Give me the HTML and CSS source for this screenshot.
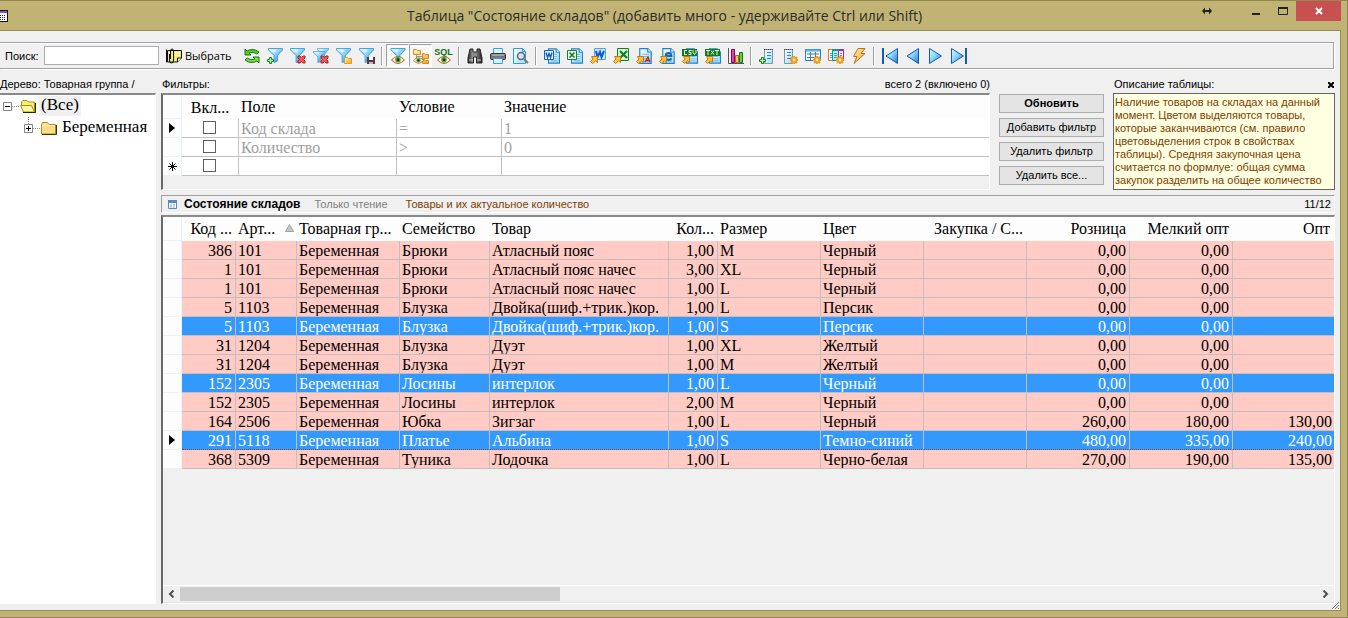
FILE: index.html
```html
<!DOCTYPE html>
<html lang="ru">
<head>
<meta charset="utf-8">
<title>Таблица "Состояние складов"</title>
<link rel="stylesheet" href="styles.css">
</head>
<body>
<svg class="sprite" aria-hidden="true">
  <defs>
    <linearGradient id="blue" x1="0" y1="0" x2="1" y2="1"><stop offset="0" stop-color="#e4f9ff"/><stop offset=".45" stop-color="#8cd6fa"/><stop offset="1" stop-color="#1c78d4"/></linearGradient>
    <linearGradient id="sheet" x1="0" y1="0" x2="1" y2="1"><stop offset="0" stop-color="#ffffff"/><stop offset="1" stop-color="#9fdcf8"/></linearGradient>
    <linearGradient id="gold" x1="0" y1="0" x2="1" y2="1"><stop offset="0" stop-color="#fff3a8"/><stop offset="1" stop-color="#f0a030"/></linearGradient>
    <linearGradient id="metal" x1="0" y1="0" x2="1" y2="0"><stop offset="0" stop-color="#222"/><stop offset=".4" stop-color="#aaa"/><stop offset="1" stop-color="#222"/></linearGradient>
  </defs>
  <symbol id="funnel" viewBox="0 0 16 16"><path d="M.5.5h15v1.500L10 8v6l-3.500 1.500V8L.5 2z" fill="url(#blue)" stroke="#3c9ae4"/><path d="M2 1.500h7L7 5z" fill="#dff7ff"/></symbol>
  <symbol id="cross" viewBox="0 0 9 9"><path d="M1 1h2l1.500 1.500L6 1h2v2L6.500 4.500 8 6v2H6L4.500 6.500 3 8H1V6l1.500-1.500L1 3z" fill="#f05a5a" stroke="#b81420"/></symbol>
  <symbol id="plus" viewBox="0 0 7 7"><path d="M2.500.5h2v2h2v2h-2v2h-2v-2h-2v-2h2z" fill="#b5f5a0" stroke="#16801c"/></symbol>
  <symbol id="eye" viewBox="0 0 14 8"><path d="M.5 4Q3.500.5 7 .5t6.500 3.500Q10 7.500 7 7.500T.5 4z" fill="#fdf1d5" stroke="#a8622e"/><circle cx="7" cy="3.800" r="2.700" fill="#4c9a38"/><circle cx="7" cy="3.800" r="1.200" fill="#162c10"/></symbol>
  <symbol id="page" viewBox="0 0 11 14"><path d="M.5.5h7l3 3v10H.5z" fill="url(#sheet)" stroke="#1c80d0"/><path d="M7.500.5v3h3" fill="#fff" stroke="#1c80d0"/><path d="M2.500 5.500h6M2.500 7.500h6M2.500 9.500h6M2.500 11.500h6" stroke="#7cbce8"/></symbol>
  <symbol id="arrow" viewBox="0 0 8 8"><path d="M1.500.5h6v6L5.500 5 2.500 7.500l-2-2L3 3z" fill="#ffc13c" stroke="#c47a10"/></symbol>
  <symbol id="gear" viewBox="0 0 8 8"><path d="M3 0h2v1l1.500-.5 1 1L7 3h1v2H7l.5 1.500-1 1L5 7v1H3V7l-1.500.5-1-1L1 5H0V3h1L.5 1.500l1-1L3 1z" fill="#f79a1c"/><circle cx="4" cy="4" r="1.400" fill="#fff2c6"/></symbol>
  <symbol id="folder" viewBox="0 0 16 13"><path d="M.5 2.500l1-2h5l1.500 2h6.500v9.500H.5z" fill="#ffdc8c" stroke="#b09010"/><path d="M1.500 3.500h12" stroke="#fff8c8"/><path d="M1 12.500h14.500V3" fill="none" stroke="#3c3208"/></symbol>
  <symbol id="folder-open" viewBox="0 0 16 13"><path d="M1.500 5V2l1.500-1.500h4L8.500 2h6v10" fill="#f6ec78" stroke="#a09018"/><path d="M.5 5.500h11l3 6.500H3.500z" fill="#fff79a" stroke="#a09018"/><path d="M3 12.500h12.500V3" fill="none" stroke="#2c2608"/></symbol>
  <symbol id="tri" viewBox="0 0 13 16"><path d="M12.500.5v15L1 8z" fill="url(#blue)" stroke="#1659b4"/></symbol>
</svg>

<div class="window">
  <header class="titlebar">
    <svg class="app-icon" viewBox="0 0 8 12"><path d="M0 0h8v12H0z" fill="#111"/><path d="M0 1h7v2H0z" fill="#7a5cb8"/><path d="M0 3h7v8H0z" fill="#fff"/><path d="M0 5.500h6M0 7.500h6M0 9.500h6" stroke="#222" stroke-dasharray="1 1"/></svg>
    <h1 class="title">Таблица "Состояние складов" (добавить много - удерживайте Ctrl или Shift)</h1>
    <div class="win-buttons">
      <button class="win-btn move" aria-label="Переместить"><svg width="10" height="8" viewBox="0 0 10 8"><path d="M0 4l3-3.500v2.500h4V.5L10 4 7 7.500V5H3v2.500z" fill="#222"/></svg></button>
      <button class="win-btn min" aria-label="Свернуть"><svg width="10" height="10" viewBox="0 0 10 10"><path d="M1 7h8v2H1z" fill="#222"/></svg></button>
      <button class="win-btn max" aria-label="Развернуть"><svg width="10" height="8" viewBox="0 0 10 8"><path d="M.5 1.500h9v6h-9z" fill="none" stroke="#222"/><path d="M0 0h10v2H0z" fill="#222"/></svg></button>
      <button class="win-btn close" aria-label="Закрыть"><svg width="8" height="8" viewBox="0 0 8 8"><path d="M1 1l6 6M7 1L1 7" stroke="#fff" stroke-width="2"/></svg></button>
    </div>
  </header>

  <div class="client">
    <div class="toolbar" role="toolbar">
      <label class="search-label" for="search">Поиск:</label>
      <input class="search" id="search" type="text">
      <button class="pick"><svg width="16" height="16" viewBox="0 0 16 16"><path d="M1.500 2.500h14v7.500l-4 4h-10z" fill="#f4e87c" stroke="#111"/><path d="M11.500 14v-4h4" fill="#fff" stroke="#111"/><path d="M3 5h2M9 5h5M9 7.500h5" stroke="#fffbd0"/><path d="M.5 1.500v13M4.500 11V3q0-2 1.500-2t1.500 2v10q0 2-2 2t-2-2V6" fill="none" stroke="#111"/></svg>Выбрать</button>

      <button class="tool" aria-label="Обновить"><svg viewBox="0 0 16 16"><path d="M1 1v6h6L5 5q4-2 8 1l2-2Q9-.5 3 3z" fill="#5ccc2c" stroke="#147a10"/><path d="M15 15V9H9l2 2q-4 2-8-1l-2 2q6 4.500 12 1z" fill="#7fdc48" stroke="#147a10"/></svg></button>
      <button class="tool" aria-label="Добавить фильтр"><svg viewBox="0 0 16 16"><use href="#funnel" x="1" width="15" height="15"/><use href="#plus" y="9" width="7" height="7"/></svg></button>
      <button class="tool" aria-label="Удалить фильтр"><svg viewBox="0 0 16 16"><use href="#funnel" width="15" height="15"/><use href="#cross" x="7" y="7" width="9" height="9"/></svg></button>
      <button class="tool" aria-label="Удалить все фильтры"><svg viewBox="0 0 16 16"><use href="#funnel" x="4" width="12" height="12"/><use href="#funnel" y="3" width="12" height="12"/><use href="#cross" x="7" y="7" width="9" height="9"/></svg></button>
      <button class="tool" aria-label="Открыть фильтр"><svg viewBox="0 0 16 16"><use href="#funnel" width="15" height="15"/><path d="M8.500 9.500h3l1 1h3v5h-7z" fill="url(#gold)" stroke="#d8a028"/></svg></button>
      <button class="tool" aria-label="Сохранить фильтр"><svg viewBox="0 0 16 16"><use href="#funnel" width="15" height="15"/><path d="M8 9h8v7H8z" fill="#54383c"/><path d="M10 9h4v3h-4z" fill="#fff"/><path d="M10 14h4v2h-4z" fill="#c8b8ba"/></svg></button>
      <span class="sep"></span>
      <button class="tool pressed" aria-label="Показать фильтры"><svg viewBox="0 0 16 16"><use href="#funnel" width="16" height="15"/><use href="#eye" x="1" y="8" width="14" height="8"/></svg></button>
      <button class="tool pressed" aria-label="Показать дерево"><svg viewBox="0 0 16 16"><path d="M3.500 5v8h6M3.500 8.500h7" fill="none" stroke="#999"/><path d="M.5 1.500h3l1 1h3v4h-7zM9.500 5.500h2l1 1h3v4h-6zM9.500 11.500h2l1 1h3v3h-6z" fill="url(#gold)" stroke="#d09020"/><use href="#eye" y="9" width="11" height="7"/></svg></button>
      <button class="tool sql" aria-label="SQL"><span>SQL</span><svg viewBox="0 0 14 8"><use href="#eye" width="14" height="8"/></svg></button>
      <span class="sep"></span>
      <button class="tool" aria-label="Найти"><svg viewBox="0 0 16 16"><path d="M3 1h3v3h4V1h3l2 9v5H9.500V9h-3v6H1v-5z" fill="url(#metal)" stroke="#222"/><path d="M6 5h4v3H6z" fill="#888"/><path d="M2 12h4M10 12h4" stroke="#ccc"/></svg></button>
      <button class="tool" aria-label="Печать"><svg viewBox="0 0 16 16"><path d="M3.500.5h9v5h-9z" fill="#d8f2ff" stroke="#3f9ee0"/><rect x=".5" y="5.500" width="15" height="6" rx="1" fill="#777" stroke="#333"/><path d="M2 7h12" stroke="#ccc"/><path d="M3.500 10.500h9v5h-9z" fill="#d8f2ff" stroke="#3f9ee0"/></svg></button>
      <button class="tool" aria-label="Просмотр"><svg viewBox="0 0 16 16"><path d="M.5.5h9l3 3v12H.5z" fill="url(#sheet)" stroke="#2f9ae0"/><path d="M9.500.5v3h3" fill="none" stroke="#2f9ae0"/><circle cx="8" cy="8" r="3.500" fill="#c9e8f8" stroke="#667" stroke-width="1.500"/><path d="M11 11l4 4" stroke="#7c7468" stroke-width="2"/></svg></button>
      <span class="sep"></span>
      <button class="tool" aria-label="Word"><svg viewBox="0 0 16 16"><use href="#page" x="4" width="12" height="16"/><path d="M.5 2.500h9v9h-9z" fill="#e8f4ff" stroke="#1560c0"/><path d="M2 4.500l1.500 5L5 5.500l1.500 4L8 4.500" fill="none" stroke="#1458b8" stroke-width="1.400"/></svg></button>
      <button class="tool" aria-label="Excel"><svg viewBox="0 0 16 16"><use href="#page" x="4" width="12" height="16"/><path d="M.5 2.500h9v9h-9z" fill="#e8ffe8" stroke="#12802c"/><path d="M2.500 4.500l5 5M7.500 4.500l-5 5" stroke="#12802c" stroke-width="1.600"/></svg></button>
      <button class="tool" aria-label="Экспорт в Word"><svg viewBox="0 0 16 16"><path d="M4.500.5h11v11h-11z" fill="#c4e4fc" stroke="#58a4e4"/><path d="M6 3l1.500 6L10 4l1.500 5L14 3" fill="none" stroke="#0c58c0" stroke-width="2"/><use href="#arrow" y="8" width="8" height="8"/></svg></button>
      <button class="tool" aria-label="Экспорт в Excel"><svg viewBox="0 0 16 16"><path d="M4.500.5h11v12h-11z" fill="#d6f6d0" stroke="#108028"/><path d="M7 3l7 7M14 3l-7 7" stroke="#0c8024" stroke-width="2.200"/><use href="#arrow" y="8" width="8" height="8"/></svg></button>
      <button class="tool" aria-label="Экспорт в PDF"><svg viewBox="0 0 16 16"><use href="#page" x="3" width="13" height="16"/><path d="M9 14l3-5 2 5M10 12.500h4" fill="none" stroke="#d02020" stroke-width="1.300"/><use href="#arrow" y="8" width="8" height="8"/></svg></button>
      <button class="tool" aria-label="Экспорт в HTML"><svg viewBox="0 0 16 16"><use href="#page" x="3" width="13" height="16"/><path d="M6.500 8h6q0-3-3-3t-3 3.500 3 3.500q2 0 3-1.500" fill="none" stroke="#1464bc" stroke-width="1.800"/><use href="#arrow" y="8" width="8" height="8"/></svg></button>
      <button class="tool" aria-label="Экспорт в CSV"><svg viewBox="0 0 16 16"><use href="#page" x="4" width="12" height="16"/><path d="M0 1h15v7H0z" fill="#157824"/><path d="M5 2.500H2.500v4H5M9.500 2.500H7v2h2v2H6.500M11 2v2.500l1.500 2L14 4.500V2" fill="none" stroke="#dfffd8"/><use href="#arrow" y="8" width="8" height="8"/></svg></button>
      <button class="tool" aria-label="Экспорт в TXT"><svg viewBox="0 0 16 16"><use href="#page" x="4" width="12" height="16"/><path d="M0 1h15v7H0z" fill="#157824"/><path d="M1 2.500h4M3 2.500V7M6 2.500l3 4M9 2.500l-3 4M10 2.500h4M12 2.500V7" fill="none" stroke="#dfffd8"/><use href="#arrow" y="8" width="8" height="8"/></svg></button>
      <button class="tool" aria-label="Диаграмма"><svg viewBox="0 0 16 16"><path d="M.5 0v15.500H16" fill="none" stroke="#555"/><path d="M3.500 1.500h3v13h-3z" fill="#e040b0" stroke="#7c0860"/><path d="M7.500 7.500h3v7h-3z" fill="#ffc060" stroke="#c06810"/><path d="M11.500 4.500h3v10h-3z" fill="#60d048" stroke="#147818"/></svg></button>
      <span class="sep"></span>
      <button class="tool" aria-label="Добавить запись"><svg viewBox="0 0 16 16"><path d="M5.500 1.500h8v14h-8z" fill="url(#sheet)" stroke="#8096b0"/><path d="M5 1.500h9" stroke="#445" stroke-dasharray="1 1"/><path d="M8 4.500h4M8 7.500h4M8 10.500h4" stroke="#2c88d0"/><use href="#plus" y="9" width="7" height="7"/></svg></button>
      <button class="tool" aria-label="Свойства записи"><svg viewBox="0 0 16 16"><path d="M2.500 1.500h8v14h-8z" fill="url(#sheet)" stroke="#8096b0"/><path d="M2 1.500h9" stroke="#445" stroke-dasharray="1 1"/><path d="M5 4.500h4M5 7.500h4M5 10.500h4" stroke="#2c88d0"/><use href="#gear" x="8" y="8" width="8" height="8"/></svg></button>
      <button class="tool" aria-label="Свойства таблицы"><svg viewBox="0 0 16 16"><path d="M.5 1.500h15v11H.5z" fill="#eaf8ff" stroke="#2080d0"/><path d="M1 2.500h14" stroke="#58b4f0" stroke-width="2"/><path d="M2 6h12M2 9.500h12M5.500 4v8M10.500 4v8" stroke="#607890"/><use href="#gear" x="8" y="8" width="8" height="8"/></svg></button>
      <button class="tool" aria-label="Свойства столбцов"><svg viewBox="0 0 16 16"><path d="M.5 1.500h4v11h-4z" fill="#f4fcff" stroke="#e07820"/><path d="M4.500 1.500h6v11h-6z" fill="#a8f0e4" stroke="#10988c"/><path d="M10.500 1.500h5v11h-5z" fill="#f4e8fc" stroke="#a030a8"/><path d="M0 1.500h4" stroke="#e07820"/><path d="M4 2h7" stroke="#10988c" stroke-width="2"/><path d="M11 2h5" stroke="#a030a8" stroke-width="2"/><path d="M2 5.500h2M6 5.500h3M12 5.500h2M2 7.500h2M6 7.500h3M12 7.500h2M2 9.500h2M6 9.500h3" stroke="#4c9cb4"/><use href="#gear" x="8" y="8" width="8" height="8"/></svg></button>
      <button class="tool" aria-label="Выполнить"><svg viewBox="0 0 16 16"><path d="M7 .5h7l-4 5h4L3 15.500l3-7H2.500z" fill="url(#gold)" stroke="#c86c18"/></svg></button>
      <span class="sep"></span>
      <button class="tool" aria-label="Первая"><svg viewBox="0 0 16 16"><path d="M1 0v16" stroke="#1659b4" stroke-width="2"/><use href="#tri" x="3" width="13" height="16"/></svg></button>
      <button class="tool" aria-label="Предыдущая"><svg viewBox="0 0 16 16"><use href="#tri" x="1" width="13" height="16"/></svg></button>
      <button class="tool" aria-label="Следующая"><svg viewBox="0 0 16 16"><path d="M1.500.5v15L13.500 8z" fill="url(#blue)" stroke="#1659b4"/></svg></button>
      <button class="tool" aria-label="Последняя"><svg viewBox="0 0 16 16"><path d="M.5.5v15L12.500 8z" fill="url(#blue)" stroke="#1659b4"/><path d="M15 0v16" stroke="#1659b4" stroke-width="2"/></svg></button>
    </div>

    <div class="main">
      <aside class="side">
        <div class="caption">Дерево: Товарная группа /</div>
        <ul class="tree">
          <li class="node root"><button class="expander" aria-label="Свернуть"><svg viewBox="0 0 9 9"><path d="M.5.5h8v8h-8z" fill="#fff" stroke="#848484"/><path d="M2 4.500h5" stroke="#000"/></svg></button><span class="dots"></span><svg class="folder"><use href="#folder-open"/></svg><span class="node-text current">(Все)</span></li>
          <li class="node child"><button class="expander" aria-label="Развернуть"><svg viewBox="0 0 9 9"><path d="M.5.5h8v8h-8z" fill="#fff" stroke="#848484"/><path d="M2 4.500h5M4.500 2v5" stroke="#000"/></svg></button><span class="dots"></span><svg class="folder"><use href="#folder"/></svg><span class="node-text">Беременная</span></li>
        </ul>
      </aside>

      <section class="content">
        <div class="top">
          <div class="filters">
            <div class="caption"><span>Фильтры:</span><span>всего 2 (включено 0)</span></div>
            <div class="panel filter-panel">
              <table class="grid filter-grid">
                <colgroup><col class="c19"><col class="c57"><col class="c158"><col class="c105"><col></colgroup>
                <thead><tr><th class="mark"></th><th class="center">Вкл...</th><th>Поле</th><th>Условие</th><th>Значение</th></tr></thead>
                <tbody>
                  <tr><td class="mark"><svg width="6" height="10" viewBox="0 0 6 10"><path d="M0 0l6 5-6 5z"/></svg></td><td class="center"><input type="checkbox" aria-label="Код склада"></td><td>Код склада</td><td>=</td><td>1</td></tr>
                  <tr><td class="mark"></td><td class="center"><input type="checkbox" aria-label="Количество"></td><td>Количество</td><td>&gt;</td><td>0</td></tr>
                  <tr><td class="mark"><svg width="9" height="9" viewBox="0 0 9 9"><path d="M4.500 0v9M0 4.500h9M1.500 1.500l6 6M7.500 1.500l-6 6" stroke="#000"/></svg></td><td class="center"><input type="checkbox" aria-label="Новый фильтр"></td><td></td><td></td><td></td></tr>
                </tbody>
              </table>
            </div>
          </div>
          <div class="actions">
            <button class="btn strong">Обновить</button>
            <button class="btn">Добавить фильтр</button>
            <button class="btn">Удалить фильтр</button>
            <button class="btn">Удалить все...</button>
          </div>
          <div class="about">
            <div class="caption"><span>Описание таблицы:</span><button class="about-close" aria-label="Закрыть"><svg width="6" height="6" viewBox="0 0 6 6"><path d="M0 0l6 6M6 0L0 6" stroke="#000" stroke-width="2"/></svg></button></div>
            <div class="about-text">Наличие товаров на складах на данный<br>момент. Цветом выделяются товары,<br>которые заканчиваются (см. правило<br>цветовыделения строк в свойствах<br>таблицы). Средняя закупочная цена<br>считается по формлуе: общая сумма<br>закупок разделить на общее количество</div>
          </div>
        </div>

        <div class="infobar">
          <svg class="info-icon" viewBox="0 0 9 9"><path d="M.5.5h8v8h-8z" fill="#fff" stroke="#5a86c8"/><path d="M0 1.500h9" stroke="#5a86c8" stroke-width="3"/><path d="M2 5h5M2 7h5" stroke="#7ca0d0" stroke-dasharray="2 1"/></svg>
          <strong class="table-name">Состояние складов</strong>
          <span class="readonly">Только чтение</span>
          <span class="hint">Товары и их актуальное количество</span>
          <span class="count">11/12</span>
        </div>

        <div class="panel data-panel">
          <table class="grid data-grid">
            <colgroup><col class="c19"><col class="c54"><col class="c61"><col class="c103"><col class="c90"><col class="c179"><col class="c49"><col class="c103"><col class="c103"><col class="c103"><col class="c103"><col class="c103"><col></colgroup>
            <thead><tr><th class="mark"></th><th class="num">Код ...</th><th><span class="sorted">Арт...<svg width="9" height="8" viewBox="0 0 9 8"><path d="M4.500.5L8.500 7.500H.5z" fill="#c8c8c8" stroke="#a0a0a0"/></svg></span></th><th>Товарная гр...</th><th>Семейство</th><th>Товар</th><th class="num">Кол...</th><th>Размер</th><th>Цвет</th><th class="num">Закупка / С...</th><th class="num">Розница</th><th class="num">Мелкий опт</th><th class="num">Опт</th></tr></thead>
            <tbody>
              <tr><td class="mark"></td><td class="num">386</td><td>101</td><td>Беременная</td><td>Брюки</td><td>Атласный пояс</td><td class="num">1,00</td><td>M</td><td>Черный</td><td></td><td class="num">0,00</td><td class="num">0,00</td><td></td></tr>
              <tr><td class="mark"></td><td class="num">1</td><td>101</td><td>Беременная</td><td>Брюки</td><td>Атласный пояс начес</td><td class="num">3,00</td><td>XL</td><td>Черный</td><td></td><td class="num">0,00</td><td class="num">0,00</td><td></td></tr>
              <tr><td class="mark"></td><td class="num">1</td><td>101</td><td>Беременная</td><td>Брюки</td><td>Атласный пояс начес</td><td class="num">1,00</td><td>L</td><td>Черный</td><td></td><td class="num">0,00</td><td class="num">0,00</td><td></td></tr>
              <tr><td class="mark"></td><td class="num">5</td><td>1103</td><td>Беременная</td><td>Блузка</td><td>Двойка(шиф.+трик.)кор.</td><td class="num">1,00</td><td>L</td><td>Персик</td><td></td><td class="num">0,00</td><td class="num">0,00</td><td></td></tr>
              <tr class="selected"><td class="mark"></td><td class="num">5</td><td>1103</td><td>Беременная</td><td>Блузка</td><td>Двойка(шиф.+трик.)кор.</td><td class="num">1,00</td><td>S</td><td>Персик</td><td></td><td class="num">0,00</td><td class="num">0,00</td><td></td></tr>
              <tr><td class="mark"></td><td class="num">31</td><td>1204</td><td>Беременная</td><td>Блузка</td><td>Дуэт</td><td class="num">1,00</td><td>XL</td><td>Желтый</td><td></td><td class="num">0,00</td><td class="num">0,00</td><td></td></tr>
              <tr><td class="mark"></td><td class="num">31</td><td>1204</td><td>Беременная</td><td>Блузка</td><td>Дуэт</td><td class="num">1,00</td><td>M</td><td>Желтый</td><td></td><td class="num">0,00</td><td class="num">0,00</td><td></td></tr>
              <tr class="selected"><td class="mark"></td><td class="num">152</td><td>2305</td><td>Беременная</td><td>Лосины</td><td>интерлок</td><td class="num">1,00</td><td>L</td><td>Черный</td><td></td><td class="num">0,00</td><td class="num">0,00</td><td></td></tr>
              <tr><td class="mark"></td><td class="num">152</td><td>2305</td><td>Беременная</td><td>Лосины</td><td>интерлок</td><td class="num">2,00</td><td>M</td><td>Черный</td><td></td><td class="num">0,00</td><td class="num">0,00</td><td></td></tr>
              <tr><td class="mark"></td><td class="num">164</td><td>2506</td><td>Беременная</td><td>Юбка</td><td>Зигзаг</td><td class="num">1,00</td><td>L</td><td>Черный</td><td></td><td class="num">260,00</td><td class="num">180,00</td><td class="num">130,00</td></tr>
              <tr class="selected focused"><td class="mark"><svg width="6" height="10" viewBox="0 0 6 10"><path d="M0 0l6 5-6 5z"/></svg></td><td class="num">291</td><td>5118</td><td>Беременная</td><td>Платье</td><td>Альбина</td><td class="num">1,00</td><td>S</td><td>Темно-синий</td><td></td><td class="num">480,00</td><td class="num">335,00</td><td class="num">240,00</td></tr>
              <tr><td class="mark"></td><td class="num">368</td><td>5309</td><td>Беременная</td><td>Туника</td><td>Лодочка</td><td class="num">1,00</td><td>L</td><td>Черно-белая</td><td></td><td class="num">270,00</td><td class="num">190,00</td><td class="num">135,00</td></tr>
            </tbody>
          </table>
          <div class="scrollbar">
            <button class="scroll-btn" aria-label="Влево"><svg width="7" height="8" viewBox="0 0 7 8"><path d="M5.500.5L2 4l3.500 3.500" fill="none" stroke="#505050" stroke-width="2"/></svg></button>
            <div class="track"><div class="thumb"></div></div>
            <button class="scroll-btn" aria-label="Вправо"><svg width="7" height="8" viewBox="0 0 7 8"><path d="M1.500.5L5 4 1.500 7.500" fill="none" stroke="#505050" stroke-width="2"/></svg></button>
          </div>
        </div>
      </section>
    </div>
    <svg class="grip" viewBox="0 0 9 9"><path d="M1 8l7-7M4 8l4-4M7 8l1-1" stroke="#777"/></svg>
  </div>
</div>
</body>
</html>
```

FILE: styles.css
```css
* { box-sizing: border-box; }
html, body { height: 100%; }
body {
  margin: 0;
  overflow: hidden;
  color: #000;
  font-family: "Liberation Sans", sans-serif;
  font-size: 11px;
}
button { padding: 0; border: 0; background: none; font: inherit; color: inherit; }
svg { display: block; flex: none; }
.sprite { position: absolute; width: 0; height: 0; }

.window {
  display: flex;
  flex-direction: column;
  height: 100vh;
  background: #c1b374;
  border: 1px solid #92874f;
  border-left: 0;
}
.titlebar { display: flex; align-items: center; height: 29px; }
.app-icon { width: 8px; height: 12px; }
.title {
  flex: 1;
  margin: 0;
  padding-left: 128px;
  text-align: center;
  font: 14px/29px "Open Sans", sans-serif;
  color: #2b2b2b;
  white-space: nowrap;
}
.win-buttons { display: flex; align-self: flex-start; padding-right: 6px; }
.win-btn { display: flex; align-items: center; justify-content: center; width: 27px; height: 20px; }
.win-btn.move { margin-right: 22px; }
.win-btn.close { width: 45px; background: #c75050; }

.client {
  position: relative;
  display: flex;
  flex: 1;
  flex-direction: column;
  min-height: 0;
  margin: 0 6px 6px 0;
  padding: 11px 5px 6px 0;
  background: #f0f0f0;
  border: 1px solid #978c54;
  border-left: 0;
}
.toolbar {
  display: flex;
  align-items: center;
  height: 27px;
  margin-right: 1px;
  padding-left: 5px;
  border: 1px solid #a7a39a;
  border-left: 0;
  box-shadow: inset 0 1px #fff, 1px 1px #fff;
}
.search-label { width: 39px; }
.search { width: 115px; height: 19px; padding: 0 3px; border: 1px solid #abadb3; background: #fff; font: inherit; }
.pick { display: flex; align-items: center; gap: 3px; width: 74px; margin-left: 7px; font: 11px/16px "Open Sans", sans-serif; white-space: nowrap; }
.tool { display: flex; flex: none; flex-direction: column; align-items: center; justify-content: center; width: 23px; height: 23px; }
.tool svg { width: 16px; height: 16px; }
.tool.pressed { border: 1px solid; border-color: #a0a0a0 #fff #fff #a0a0a0; background: #f8f8f8; }
.tool.sql { font: bold 9px/8px "Liberation Sans", sans-serif; color: #107018; }
.tool.sql svg { width: 14px; height: 8px; }
.sep { flex: none; width: 2px; height: 18px; margin: 0 3px; background: #a0a0a0; border-right: 1px solid #fff; }

.main { display: grid; flex: 1; grid-template-columns: 156px minmax(0, 1fr); gap: 5px; min-height: 0; }
.caption { display: flex; justify-content: space-between; height: 24px; padding: 8px 0 0 1px; line-height: 14px; white-space: nowrap; }
.side { display: flex; flex-direction: column; }
.side .caption { padding-left: 0; }
.panel, .tree { border-style: solid; border-color: #8a8a8a #fff #fff #696969; border-width: 2px 1px 1px 2px; }
.tree {
  flex: 1;
  margin: 0;
  padding: 0;
  background: #fff;
  border-left: 0;
  list-style: none;
  font: 17px/20px "Liberation Serif", serif;
}
.node { display: flex; align-items: center; height: 22px; padding-left: 3px; }
.node.child { padding-left: 24px; background: repeating-linear-gradient(#888 0 1px, #fff 1px 2px) 28px 0 / 1px 8px no-repeat; }
.expander, .expander svg { width: 9px; height: 9px; }
.dots { width: 8px; height: 1px; background: repeating-linear-gradient(90deg, #888 0 1px, #fff 1px 2px); }
.folder { width: 16px; height: 13px; }
.node-text { margin-left: 3px; padding: 0 2px 2px; line-height: 18px; }
.node-text.current { background: #f0f0f0; }

.content { display: flex; flex-direction: column; min-width: 0; }
.top { display: grid; grid-template-columns: minmax(0, 1fr) 105px 222px; gap: 9px; height: 120px; }
.filters, .about { display: flex; flex-direction: column; min-width: 0; }
.filter-panel { flex: 1; }
.actions { display: flex; flex-direction: column; gap: 5px; padding-top: 25px; }
.btn { height: 19px; border: 1px solid #acacac; background: #e4e4e4; line-height: 17px; white-space: nowrap; }
.btn.strong { font-weight: bold; }
.about-close { padding: 0 1px; }
.about-text { flex: 1; padding: 2px 1px; overflow: hidden; background: #ffffe1; border: 1px solid #646464; line-height: 13px; color: #804000; white-space: nowrap; }

.infobar {
  display: flex;
  align-items: center;
  height: 18px;
  margin: 6px 0 2px;
  padding: 0 3px 0 6px;
  border: 1px solid #fff;
  border-top-color: #a0a0a0;
  border-left-color: #a0a0a0;
  white-space: nowrap;
}
.info-icon { width: 9px; height: 9px; margin-right: 7px; }
.table-name { font-size: 12px; }
.readonly { margin-left: 14px; color: #808080; }
.hint { margin-left: 18px; color: #804000; }
.count { margin-left: auto; }

.data-panel { display: flex; flex: 1; flex-direction: column; min-height: 0; overflow: hidden; }
.grid { width: 100%; table-layout: fixed; border-spacing: 0; font: 16px/17px "Liberation Serif", serif; white-space: nowrap; }
.grid th { height: 24px; padding: 0 3px 2px 2px; background: #fdfdfd; font-weight: normal; text-align: left; }
.grid td { height: 19px; padding: 1px 3px 0 2px; overflow: hidden; border: solid #c0c0c0; border-width: 0 1px 1px 0; }
.grid td:last-child { padding-right: 2px; border-right: 0; }
.grid th:last-child { padding-right: 2px; }
.grid .mark { padding: 0; background: #fdfdfd; border: solid #e9f2f8; border-width: 0 1px 1px 0; }
.mark svg { margin: 0 auto; }
.grid .num { text-align: right; }
.grid th.num { padding-right: 4px; }
.grid .center { padding: 0 1px 0 0; text-align: center; }
.filter-grid td { background: #fff; color: #a0a0a0; }
.data-grid tbody td { background: #ffcbc4; }
.data-grid tbody .selected td { background: #3399ff; color: #fff; }
.data-grid tbody td.mark, .data-grid tbody .selected td.mark { background: #fdfdfd; }
.data-grid .focused td:not(.mark) { border-bottom: 1px dotted #80502c; }
.sorted { display: flex; align-items: center; justify-content: space-between; }
.grid input { display: block; width: 13px; height: 13px; margin: 0 auto 1px; appearance: none; background: #fff; border: 1px solid #606060; }
.c19 { width: 19px; } .c49 { width: 49px; } .c54 { width: 54px; } .c57 { width: 57px; }
.c61 { width: 61px; } .c90 { width: 90px; } .c103 { width: 103px; } .c105 { width: 105px; }
.c158 { width: 158px; } .c179 { width: 179px; }

.scrollbar { display: flex; height: 18px; margin-top: auto; padding: 1px 0; border-top: 1px solid #fff; border-bottom: 1px solid #e3e3e3; }
.scroll-btn { display: flex; flex: none; align-items: center; justify-content: center; width: 17px; }
.track { flex: 1; }
.thumb { width: 33.4%; height: 100%; background: #cdcdcd; }
.grip { position: absolute; right: 0; bottom: 0; width: 9px; height: 9px; }
```
